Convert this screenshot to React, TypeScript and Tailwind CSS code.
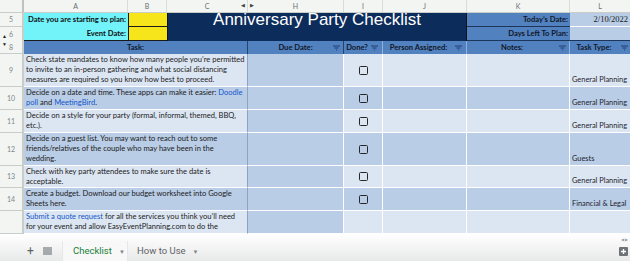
import type { ReactNode } from "react";

const COLS = "grid grid-cols-[24px_104px_39px_81px_96px_39px_84px_103px_60px]";

const Link = ({ children }: { children: ReactNode }) => (
  <span className="text-[#1155cc]">{children}</span>
);

const FilterIcon = () => (
  <svg width="7" height="6" viewBox="0 0 7 6" className="shrink-0">
    <path d="M0 1h7M1.5 3h4M3 5h1" stroke="#1f3f6e" strokeWidth="1.2" />
  </svg>
);

const Checkbox = () => (
  <div className="w-[9px] h-[9px] border-[1.5px] border-[#262626] rounded-[1.5px]" />
);

type Row = {
  n: string;
  h: string;
  light: boolean;
  lines: ReactNode[];
  type?: string;
  check: boolean;
};

const ROWS: Row[] = [
  {
    n: "9",
    h: "h-[33px]",
    light: true,
    lines: [
      "Check state mandates to know how many people you’re permitted",
      "to invite to an in-person gathering and what social distancing",
      "measures are required so you know how best to proceed.",
    ],
    type: "General Planning",
    check: true,
  },
  {
    n: "10",
    h: "h-[23px]",
    light: false,
    lines: [
      <>
        Decide on a date and time. These apps can make it easier: <Link>Doodle</Link>
      </>,
      <>
        <Link>poll</Link> and <Link>MeetingBird</Link>.
      </>,
    ],
    type: "General Planning",
    check: true,
  },
  {
    n: "11",
    h: "h-[23px]",
    light: true,
    lines: ["Decide on a style for your party (formal, informal, themed, BBQ,", "etc.)."],
    type: "General Planning",
    check: true,
  },
  {
    n: "12",
    h: "h-[33px]",
    light: false,
    lines: [
      "Decide on a guest list.  You may want to reach out to some",
      "friends/relatives of the couple who may have been in the",
      "wedding.",
    ],
    type: "Guests",
    check: true,
  },
  {
    n: "13",
    h: "h-[22px]",
    light: true,
    lines: ["Check with key party attendees to make sure the date is", "acceptable."],
    type: "General Planning",
    check: true,
  },
  {
    n: "14",
    h: "h-[23px]",
    light: false,
    lines: ["Create a budget. Download our budget worksheet into Google", "Sheets here."],
    type: "Financial & Legal",
    check: true,
  },
  {
    n: "",
    h: "h-[23px]",
    light: true,
    lines: [
      <>
        <Link>Submit a quote request</Link> for all the services you think you’ll need
      </>,
      "for your event and allow EasyEventPlanning.com to do the",
    ],
    check: false,
  },
];

const App = () => {
  return (
    <div className="w-[630px] h-[261px] overflow-hidden bg-white font-['Lato',sans-serif] text-[#1b1b1b]">
      {/* column letters */}
      <div className={`${COLS} h-[13px] bg-[#f2f5f2] text-[7px] text-[#6b6f72] border-b border-[#c9cdc9]`}>
        <div className="border-r-2 border-[#bfc3bf]" />
        <div className="flex items-center justify-center border-r border-[#dadcda]">A</div>
        <div className="flex items-center justify-center border-r border-[#dadcda]">B</div>
        <div className="relative flex items-center justify-center border-r border-[#dadcda]">
          C<span className="absolute right-[2px] text-[5px] text-[#3c4043]">◀</span>
        </div>
        <div className="relative flex items-center justify-center border-r border-[#dadcda]">
          H<span className="absolute left-[2px] text-[5px] text-[#3c4043]">▶</span>
        </div>
        <div className="flex items-center justify-center border-r border-[#dadcda]">I</div>
        <div className="flex items-center justify-center border-r border-[#dadcda]">J</div>
        <div className="flex items-center justify-center border-r border-[#dadcda]">K</div>
        <div className="flex items-center justify-center">L</div>
      </div>

      {/* rows 5-6 */}
      <div className={`${COLS} grid-rows-[14px_14px] h-[28px]`}>
        <div className="col-start-1 row-start-1 flex items-center justify-center bg-[#f2f5f2] text-[7px] text-[#80868b] border-r-2 border-b border-[#c9cdc9]">
          5
        </div>
        <div className="col-start-1 row-start-2 relative flex items-center justify-center bg-[#f2f5f2] text-[7px] text-[#80868b] border-r-2 border-[#c9cdc9]">
          <span className="absolute left-[2px] bottom-[1px] text-[5px] text-[#202124]">▲</span>
          6
        </div>
        <div className="col-start-2 row-start-1 flex items-center justify-end pr-[2px] bg-[#72f2f9] font-bold text-[7.6px] text-[#111]">
          Date you are starting to plan:
        </div>
        <div className="col-start-2 row-start-2 flex items-center justify-end pr-[2px] bg-[#72f2f9] font-bold text-[7.6px] text-[#111] border-b border-[#1a1a1a]">
          Event Date:
        </div>
        <div className="col-start-3 row-start-1 bg-[#f7e51c] border-b border-l border-[#1a1a1a]" />
        <div className="col-start-3 row-start-2 bg-[#f7e51c] border-b border-l border-[#1a1a1a]" />
        <div className="col-start-4 col-span-4 row-start-1 row-span-2 flex justify-center bg-[#0c2c5c] border-l border-r border-[#111]">
          <span className="font-['Liberation_Sans',Arial,sans-serif] text-[17px] leading-[14px] text-white whitespace-nowrap">
            Anniversary Party Checklist
          </span>
        </div>
        <div className="col-start-8 row-start-1 flex items-center justify-end pr-[2px] bg-[#5281c0] font-bold text-[7.6px] text-[#101828] border-b border-[#1d3559]">
          Today’s Date:
        </div>
        <div className="col-start-8 row-start-2 flex items-center justify-end pr-[2px] bg-[#5281c0] font-bold text-[7.6px] text-[#101828] border-b border-[#1d3559]">
          Days Left To Plan:
        </div>
        <div className="col-start-9 row-start-1 flex items-center justify-end pr-[2px] bg-[#b9cde6] font-['Liberation_Serif',serif] text-[8.5px] text-[#1a1a1a] border-b border-white">
          2/10/2022
        </div>
        <div className="col-start-9 row-start-2 bg-[#b9cde6] border-b border-[#1d3559]" />
      </div>

      {/* header row 8 */}
      <div className={`${COLS} h-[13px] font-bold text-[7.6px] text-[#101828]`}>
        <div className="relative flex items-center justify-center bg-[#f2f5f2] text-[7px] font-normal text-[#80868b] border-r-2 border-b border-[#c9cdc9]">
          <span className="absolute left-[2px] top-0 text-[5px] text-[#202124]">▼</span>8
        </div>
        <div className="col-span-3 flex items-center justify-center bg-[#5281c0] border-r border-[#24436d]">Task:</div>
        <div className="relative flex items-center justify-center bg-[#5281c0] border-r border-[#24436d]">
          Due Date:
          <span className="absolute right-[3px] top-[4px]">
            <FilterIcon />
          </span>
        </div>
        <div className="relative flex items-center justify-center pr-3 bg-[#5281c0] border-r border-[#8fb0da]">
          Done?
          <span className="absolute right-[4px] top-[4px]">
            <FilterIcon />
          </span>
        </div>
        <div className="relative flex items-center justify-center pr-3 bg-[#5281c0] border-r border-[#8fb0da]">
          Person Assigned:
          <span className="absolute right-[4px] top-[4px]">
            <FilterIcon />
          </span>
        </div>
        <div className="relative flex items-center justify-center pr-3 bg-[#5281c0] border-r border-[#8fb0da]">
          Notes:
          <span className="absolute right-[3px] top-[4px]">
            <FilterIcon />
          </span>
        </div>
        <div className="relative flex items-center justify-center pr-3 bg-[#5281c0]">
          Task Type:
          <span className="absolute right-[2px] top-[4px]">
            <FilterIcon />
          </span>
        </div>
      </div>

      {/* data rows */}
      {ROWS.map((r, i) => {
        const bg = r.light ? "bg-[#dce6f2]" : "bg-[#b9cde6]";
        return (
          <div key={i} className={`${COLS} ${r.h}`}>
            <div className="flex items-center justify-center bg-[#f2f5f2] text-[7px] text-[#80868b] border-r-2 border-b border-[#c9cdc9]">
              {r.n}
            </div>
            <div className={`col-span-3 overflow-hidden pl-[2px] pt-px text-[7.55px] leading-[9.8px] border-r border-b border-r-[#8ea3bf] border-b-white ${bg}`}>
              {r.lines.map((l, j) => (
                <div key={j} className="whitespace-nowrap">
                  {l}
                </div>
              ))}
            </div>
            <div className="bg-[#b9cde6] border-r border-b border-white" />
            <div className={`flex items-center justify-center border-r border-b border-white ${bg}`}>
              {r.check && <Checkbox />}
            </div>
            <div className={`border-r border-b border-white ${bg}`} />
            <div className={`border-r border-b border-white ${bg}`} />
            <div className={`flex items-end pl-[2px] pb-[2px] text-[7.4px] leading-[9px] whitespace-nowrap overflow-hidden text-[#1f2430] border-b border-white ${bg}`}>
              {r.type}
            </div>
          </div>
        );
      })}

      {/* sheet tabs */}
      <div className="relative h-[27px] bg-linear-to-b from-white via-[#f3f4f3] to-[#e8eae9] flex items-end font-['Roboto',sans-serif] text-[9.5px]">
        <div className="w-[62px] h-[20px] flex items-center pl-[27px] gap-[9px] text-[#5f6368]">
          <span className="text-[12px] leading-none">+</span>
          <svg width="9" height="8" viewBox="0 0 9 8">
            <path d="M0 1h9M0 3h9M0 5h9M0 7h9" stroke="#5f6368" strokeWidth="1.1" />
          </svg>
        </div>
        <div className="w-[66px] h-[20px] flex items-center pl-[10px] gap-[7px] text-[#188038] border-l border-r border-[#e6e8e7] bg-[#f7f8f7]">
          <span>Checklist</span>
          <span className="text-[6px] text-[#80868b]">▼</span>
        </div>
        <div className="h-[20px] flex items-center pl-[9px] gap-[7px] text-[#5f6368]">
          <span>How to Use</span>
          <span className="text-[6px] text-[#80868b]">▼</span>
        </div>
        <div className="absolute right-[2px] top-[3px] text-[4px] text-[#9aa0a6]">◀ ▶</div>
        <div className="absolute right-[2px] bottom-[5px] w-[9px] h-[9px] rounded-[1px] bg-[#6f7377] flex items-center justify-center">
          <svg width="5" height="5" viewBox="0 0 5 5">
            <path d="M2.5 0v5M0 2.5h5" stroke="white" strokeWidth="1.3" />
          </svg>
        </div>
      </div>
    </div>
  );
};

export default App;
